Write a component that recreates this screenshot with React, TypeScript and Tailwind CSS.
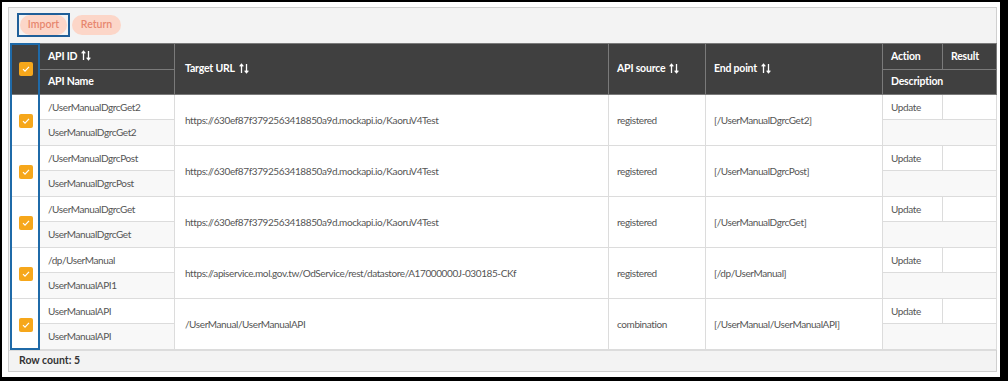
import React from 'react';

const rows = [
  { id: '/UserManualDgrcGet2', name: 'UserManualDgrcGet2', url: 'https://630ef87f3792563418850a9d.mockapi.io/KaoruV4Test', source: 'registered', end: '[/UserManualDgrcGet2]' },
  { id: '/UserManualDgrcPost', name: 'UserManualDgrcPost', url: 'https://630ef87f3792563418850a9d.mockapi.io/KaoruV4Test', source: 'registered', end: '[/UserManualDgrcPost]' },
  { id: '/UserManualDgrcGet', name: 'UserManualDgrcGet', url: 'https://630ef87f3792563418850a9d.mockapi.io/KaoruV4Test', source: 'registered', end: '[/UserManualDgrcGet]' },
  { id: '/dp/UserManual', name: 'UserManualAPI1', url: 'https://apiservice.mol.gov.tw/OdService/rest/datastore/A17000000J-030185-CKf', source: 'registered', end: '[/dp/UserManual]' },
  { id: 'UserManualAPI', name: 'UserManualAPI', url: '/UserManual/UserManualAPI', source: 'combination', end: '[/UserManual/UserManualAPI]' },
];

const SortIcon = () => (
  <svg width="10" height="11" viewBox="0 0 10 11" className="inline-block ml-[4px] -mt-0.5" fill="none" stroke="#fff" strokeWidth="1.3">
    <path d="M2.5 10V1.5M0.7 3.4L2.5 1.2 4.3 3.4" />
    <path d="M7.5 1v8.5M5.7 7.6L7.5 9.8 9.3 7.6" />
  </svg>
);

const Check = () => (
  <span className="inline-flex items-center justify-center w-[14px] h-[14px] rounded-[2px] bg-[#f6a71b] align-middle">
    <svg width="10" height="10" viewBox="0 0 10 10" fill="none" stroke="#fff" strokeWidth="1.2">
      <path d="M2 5.2l2 2 4-4.4" />
    </svg>
  </span>
);

export default function App() {
  const th = 'bg-[#404040] text-white font-bold text-[10.5px] tracking-[-0.2px] text-left border border-[#7a7a7a] px-2 whitespace-nowrap';
  const td = 'border border-[#dcdcdc] text-[#555] text-[10px] tracking-[-0.4px] px-2 whitespace-nowrap';
  return (
    <div className="w-[1008px] h-[381px] bg-black pt-[2px] pl-[2px] pr-[8px] pb-[4px]" style={{ fontFamily: 'Lato, "Open Sans", sans-serif' }}>
      <div className="w-full h-full bg-white pt-[5px] pl-[6px] pr-[3px] pb-[5px]">
        <div className="h-full bg-[#f3f3f3] border border-[#cfcfcf] flex flex-col">
          <div className="flex items-start gap-[2px] pl-[8px] pt-[5px] h-[35px]">
            <div className="border-2 border-[#1f5f99] px-[1px]">
              <button className="h-[20px] w-[47px] rounded-full bg-[#fcd6c8] text-[#e7866e] text-[10.5px] font-semibold block">Import</button>
            </div>
            <button className="mt-[2px] h-[20px] w-[49px] rounded-full bg-[#fcd6c8] text-[#e7866e] text-[10.5px] font-semibold">Return</button>
          </div>
          <div className="relative pl-[1px]">
            <table className="table-fixed border-collapse w-[986px]">
              <colgroup>
                <col className="w-[29px]" />
                <col className="w-[135px]" />
                <col className="w-[434px]" />
                <col className="w-[97px]" />
                <col className="w-[177px]" />
                <col className="w-[60px]" />
                <col className="w-[54px]" />
              </colgroup>
              <thead>
                <tr className="h-[26px]">
                  <th rowSpan={2} className={th + ' text-center px-0'}><Check /></th>
                  <th className={th}>API ID<SortIcon /></th>
                  <th rowSpan={2} className={th + ' px-[10px]'}>Target URL<SortIcon /></th>
                  <th rowSpan={2} className={th}>API source<SortIcon /></th>
                  <th rowSpan={2} className={th}>End point<SortIcon /></th>
                  <th className={th}>Action</th>
                  <th className={th}>Result</th>
                </tr>
                <tr className="h-[25px]">
                  <th className={th}>API Name</th>
                  <th colSpan={2} className={th}>Description</th>
                </tr>
              </thead>
              <tbody>
                {rows.map((r, i) => (
                  <React.Fragment key={i}>
                    <tr className="h-[25px] bg-white">
                      <td rowSpan={2} className={td + ' text-center px-0'}><Check /></td>
                      <td className={td}>{r.id}</td>
                      <td rowSpan={2} className={td + ' px-[10px]'}>{r.url}</td>
                      <td rowSpan={2} className={td}>{r.source}</td>
                      <td rowSpan={2} className={td}>{r.end}</td>
                      <td className={td}>Update</td>
                      <td className={td}></td>
                    </tr>
                    <tr className="h-[26px]">
                      <td className={td + ' bg-[#f8f8f8]'}>{r.name}</td>
                      <td colSpan={2} className={td + ' bg-[#f8f8f8]'}></td>
                    </tr>
                  </React.Fragment>
                ))}
              </tbody>
            </table>
            <div className="absolute left-[1px] top-0 bottom-0 w-[30px] border-2 border-[#1f6aa8] pointer-events-none" />
          </div>
          <div className="flex-1 flex items-center pl-[10px] border-t border-[#dcdcdc] text-[10.5px] font-bold text-[#333]">Row count: 5</div>
        </div>
      </div>
    </div>
  );
}
